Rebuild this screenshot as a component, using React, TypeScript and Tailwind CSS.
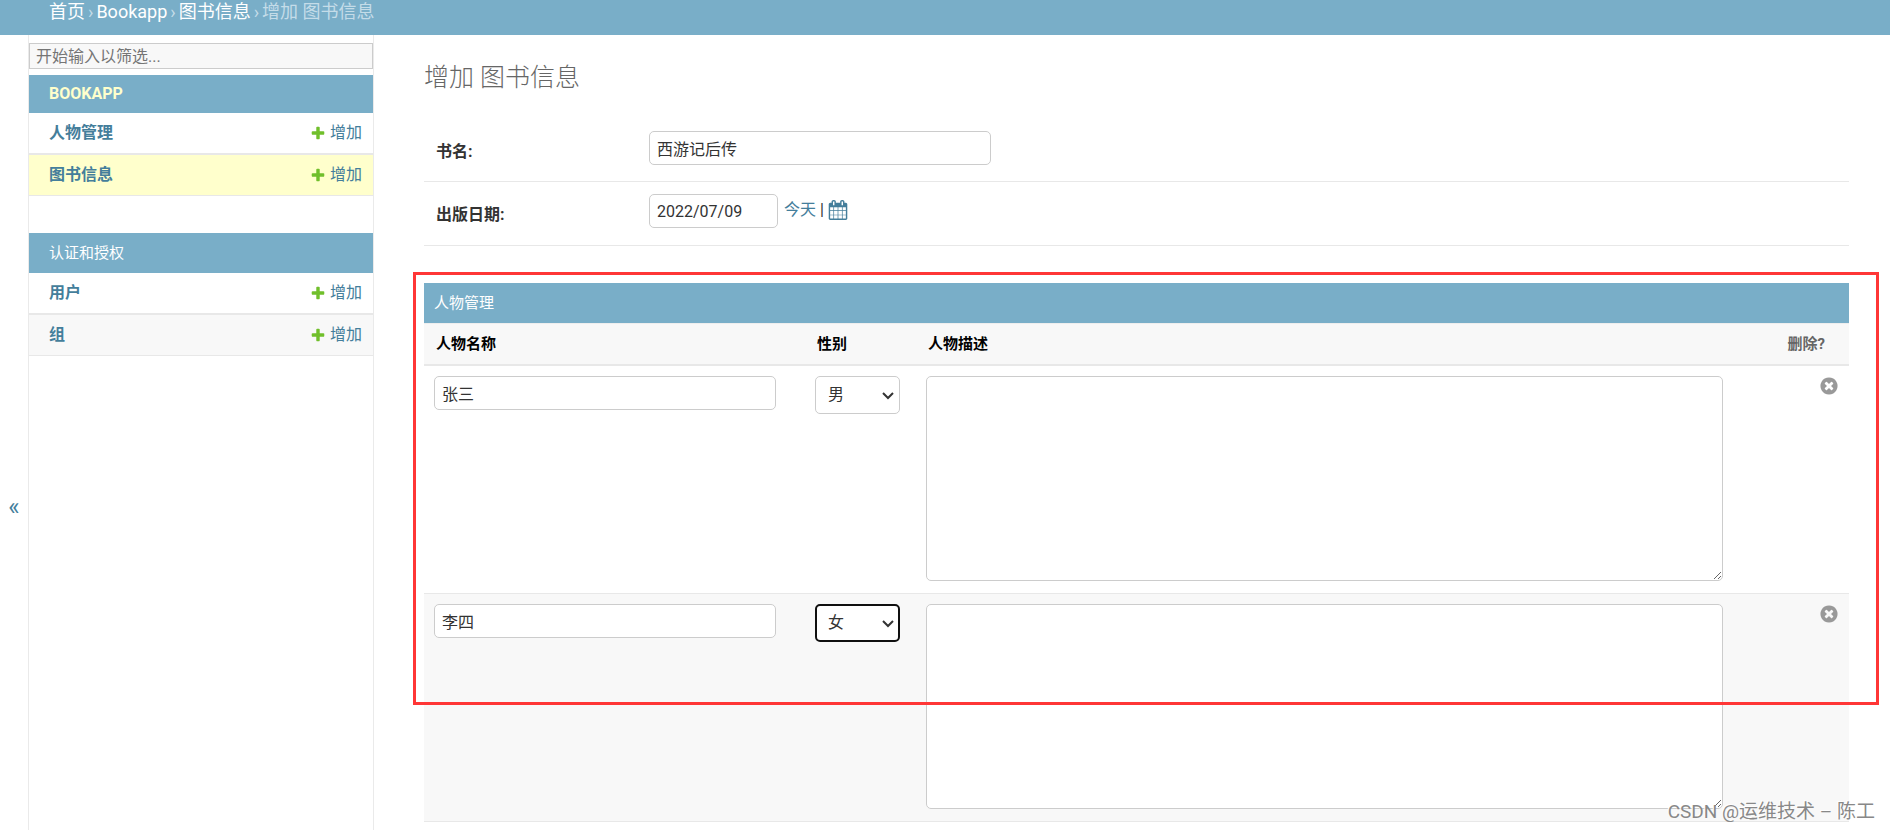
import { useState } from "react";

type AppSection = { name: string; current?: boolean; models: string[] };

const SECTIONS: AppSection[] = [
  { name: "Bookapp", current: true, models: ["人物管理", "图书信息"] },
  { name: "认证和授权", models: ["用户", "组"] },
];

const CURRENT_MODEL = "图书信息";

const inputClass =
  "h-[34px] rounded-[5px] border border-[#ccc] bg-white px-[7px] text-base text-[#333] outline-none";

function PlusIcon() {
  return (
    <svg width="16" height="16" viewBox="0 0 1792 1792" fill="#70bf2b" aria-hidden="true">
      <path d="M1600 796v192q0 40-28 68t-68 28h-416v416q0 40-28 68t-68 28h-192q-40 0-68-28t-28-68v-416h-416q-40 0-68-28t-28-68v-192q0-40 28-68t68-28h416v-416q0-40 28-68t68-28h192q40 0 68 28t28 68v416h416q40 0 68 28t28 68z" />
    </svg>
  );
}

function CalendarIcon() {
  return (
    <svg width="20" height="20" viewBox="0 0 1792 1792" fill="#447e9b" aria-hidden="true">
      <path d="M192 1664h288v-288h-288v288zm352 0h320v-288h-320v288zm-352-352h288v-320h-288v320zm352 0h320v-320h-320v320zm-352-384h288v-288h-288v288zm736 736h320v-288h-320v288zm-384-736h320v-288h-320v288zm768 736h288v-288h-288v288zm-384-352h320v-320h-320v320zm-352-864v-288q0-13-9.5-22.5t-22.5-9.5h-64q-13 0-22.5 9.5t-9.5 22.5v288q0 13 9.5 22.5t22.5 9.5h64q13 0 22.5-9.5t9.5-22.5zm736 864h288v-320h-288v320zm-384-384h320v-288h-320v288zm384 0h288v-288h-288v288zm32-480v-288q0-13-9.5-22.5t-22.5-9.5h-64q-13 0-22.5 9.5t-9.5 22.5v288q0 13 9.5 22.5t22.5 9.5h64q13 0 22.5-9.5t9.5-22.5zm384-64v1280q0 52-38 90t-90 38h-1408q-52 0-90-38t-38-90v-1280q0-52 38-90t90-38h128v-96q0-66 47-113t113-47h64q66 0 113 47t47 113v96h384v-96q0-66 47-113t113-47h64q66 0 113 47t47 113v96h128q52 0 90 38t38 90z" />
    </svg>
  );
}

function DeleteIcon() {
  return (
    <svg width="20" height="20" viewBox="0 0 1792 1792" fill="#999" aria-hidden="true">
      <path d="M1277 1122q0-26-19-45l-181-181 181-181q19-19 19-45 0-27-19-46l-90-90q-19-19-46-19-26 0-45 19l-181 181-181-181q-19-19-45-19-27 0-46 19l-90 90q-19 19-19 46 0 26 19 45l181 181-181 181q-19 19-19 45 0 27 19 46l90 90q19 19 46 19 26 0 45-19l181-181 181 181q19 19 45 19 27 0 46-19l90-90q19-19 19-46zm387-226q0 209-103 385.5t-279.5 279.5-385.5 103-385.5-103-279.5-279.5-103-385.5 103-385.5 279.5-279.5 385.5-103 385.5 103 279.5 279.5 103 385.5z" />
    </svg>
  );
}

function SidebarSection({ section }: { section: AppSection }) {
  return (
    <section className="mb-[37px]">
      <h2
        className={
          section.current
            ? "flex h-[38px] items-center bg-[#79aec8] px-5 text-base font-bold text-[#ffc] uppercase"
            : "flex h-10 items-center bg-[#79aec8] px-5 text-[15px] text-white uppercase"
        }
      >
        <a href="#">{section.name}</a>
      </h2>
      <ul>
        {section.models.map((m, i) => (
          <li
            key={m}
            className={`flex items-center justify-between border-[#e8e8e8] pr-[11px] pl-5 text-base text-[#447e9b] ${
              i === 0 ? "h-[42px] border-b-2" : "h-[41px] border-b"
            } ${m === CURRENT_MODEL ? "bg-[#ffc]" : i % 2 ? "bg-[#f8f8f8]" : "bg-white"}`}
          >
            <a href="#" className="font-bold">
              {m}
            </a>
            <a href="#" className="flex items-center gap-1">
              <PlusIcon />
              增加
            </a>
          </li>
        ))}
      </ul>
    </section>
  );
}

type Person = { name: string; gender: string };

function PersonRow({ person, index }: { person: Person; index: number }) {
  const [gender, setGender] = useState(person.gender);
  return (
    <tr className={`border-b border-[#e8e8e8] align-top ${index % 2 ? "bg-[#f8f8f8]" : "bg-white"}`}>
      <td className="px-[10px] pt-[10px]">
        <input
          aria-label="人物名称"
          defaultValue={person.name}
          className={`${inputClass} w-[342px] max-w-full`}
        />
      </td>
      <td className="px-[10px] pt-[10px]">
        <span className="relative block w-[85px]">
          <select
            aria-label="性别"
            value={gender}
            onChange={(e) => setGender(e.target.value)}
            className={`h-[38px] w-full appearance-none rounded-[5px] bg-white pt-px text-base text-[#333] outline-none ${
              index === 1 ? "border-2 border-[#101010] pl-[11px]" : "border border-[#ccc] pl-3"
            }`}
          >
            <option>男</option>
            <option>女</option>
          </select>
          <svg
            width="12"
            height="8"
            viewBox="0 0 12 8"
            aria-hidden="true"
            className="pointer-events-none absolute top-4 right-[6px]"
          >
            <path d="M1 1l5 5 5-5" fill="none" stroke="#333" strokeWidth="2" />
          </svg>
        </span>
      </td>
      <td className="px-[10px] pt-[10px] pb-3">
        <textarea
          aria-label="人物描述"
          className="block h-[205px] w-[797px] max-w-full resize rounded-[5px] border border-[#ccc] bg-white p-[7px] text-base outline-none"
        />
      </td>
      <td className="px-[10px] pt-[10px] text-right">
        <button type="button" aria-label="删除" className="inline-block align-top">
          <DeleteIcon />
        </button>
      </td>
    </tr>
  );
}

export default function App() {
  return (
    <div className="relative flex h-screen flex-col overflow-hidden bg-white font-['Roboto','Noto_Sans_CJK_SC',sans-serif] text-[#333]">
      <nav className="flex h-[35px] shrink-0 items-start gap-[3px] bg-[#79aec8] pl-[49px] text-lg leading-6 text-[#c4dce8]">
        <a href="#" className="text-white">首页</a>
        <span>›</span>
        <a href="#" className="text-white">Bookapp</a>
        <span>›</span>
        <a href="#" className="text-white">图书信息</a>
        <span>›</span>
        <span>增加 图书信息</span>
      </nav>

      <div className="flex min-h-0 flex-1">
        <button
          type="button"
          aria-label="切换导航"
          className="w-[29px] shrink-0 border-r border-[#eaeaea] pt-[148px] text-2xl text-[#447e9b]"
        >
          «
        </button>
        <aside className="w-[345px] shrink-0 border-r border-[#eaeaea] pt-2">
          <input
            type="search"
            aria-label="筛选导航"
            placeholder="开始输入以筛选..."
            className="mb-[6px] block h-[26px] w-full border border-[#ccc] bg-[#f8f8f8] px-[6px] text-base outline-none placeholder:text-[#757575]"
          />
          {SECTIONS.map((s) => (
            <SidebarSection key={s.name} section={s} />
          ))}
        </aside>

        <main className="min-w-0 flex-1 pr-[41px] pl-[50px]">
          <h1 className="mt-[25px] mb-[35px] text-[25px] leading-9 font-light text-[#666]">
            增加 图书信息
          </h1>
          <form>
            <div className="flex h-[51px] items-start border-b border-[#e8e8e8] pl-3">
              <label htmlFor="title" className="w-[213px] pt-[9px] text-base font-bold">
                书名:
              </label>
              <input id="title" defaultValue="西游记后传" className={`${inputClass} w-[342px]`} />
            </div>
            <div className="flex h-16 items-start border-b border-[#e8e8e8] pt-3 pl-3">
              <label htmlFor="pub" className="w-[213px] pt-[9px] text-base font-bold">
                出版日期:
              </label>
              <input id="pub" defaultValue="2022/07/09" className={`${inputClass} w-[129px]`} />
              <span className="ml-[6px] flex items-center gap-1 pt-1 text-base text-[#447e9b]">
                <a href="#">今天</a>
                <span className="text-[#333]">|</span>
                <button type="button" aria-label="选择日期">
                  <CalendarIcon />
                </button>
              </span>
            </div>

            <div className="relative mt-[37px]">
              <h2 className="flex h-10 items-center bg-[#79aec8] px-[10px] text-[15px] text-white">
                人物管理
              </h2>
              <table className="w-full table-fixed border-collapse">
                <colgroup>
                  <col className="w-[381px]" />
                  <col className="w-[111px]" />
                  <col />
                  <col className="w-[116px]" />
                </colgroup>
                <thead>
                  <tr className="h-[41px] border-t border-b-2 border-t-[#eee] border-b-[#e8e8e8] bg-[#f8f8f8] text-left text-[15px] text-black">
                    <th className="px-3">人物名称</th>
                    <th className="px-3">性别</th>
                    <th className="px-3">人物描述</th>
                    <th className="pr-6 text-right text-[#666]">删除?</th>
                  </tr>
                </thead>
                <tbody>
                  <PersonRow index={0} person={{ name: "张三", gender: "男" }} />
                  <PersonRow index={1} person={{ name: "李四", gender: "女" }} />
                </tbody>
              </table>
              {/* highlight frame around the inline group */}
              <div className="pointer-events-none absolute -top-[11px] -right-[30px] -left-[11px] h-[433px] border-[3px] border-[#ff3636]" />
            </div>
          </form>
        </main>
      </div>

      <div className="pointer-events-none absolute right-[15px] bottom-1 text-[19px] text-[#888] [text-shadow:-1px_-1px_0_#fff]">
        CSDN @运维技术 – 陈工
      </div>
    </div>
  );
}
